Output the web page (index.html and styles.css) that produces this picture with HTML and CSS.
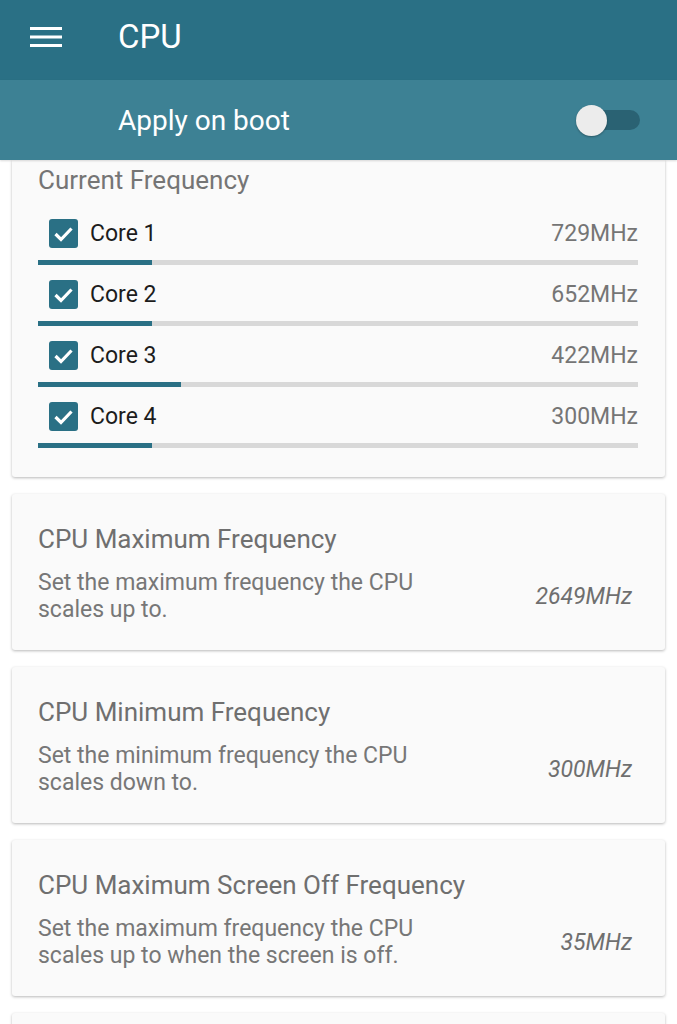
FILE: index.html
```html
<!DOCTYPE html>
<html>
<head>
<meta charset="utf-8">
<link rel="stylesheet" href="styles.css">
</head>
<body>
<header class="appbar">
  <svg class="menu" width="32" height="22" viewBox="0 0 32 22"><rect x="0" y="1" width="32" height="3" fill="#fff"/><rect x="0" y="9.5" width="32" height="3" fill="#fff"/><rect x="0" y="18" width="32" height="3" fill="#fff"/></svg>
  <span class="title">CPU</span>
</header>
<div class="bootbar">
  <span class="boot-label">Apply on boot</span>
  <span class="switch"><span class="track"></span><span class="thumb"></span></span>
</div>
<main class="content">
  <section class="card freq-card">
    <div class="card-heading">Current Frequency</div>
    <div class="core">
      <div class="core-row">
        <span class="check"><svg width="29" height="29" viewBox="0 0 29 29"><path d="M6.5 15 L12 20.5 L22.5 9.5" fill="none" stroke="#fff" stroke-width="3.2"/></svg></span>
        <span class="core-name">Core 1</span>
        <span class="core-freq">729MHz</span>
      </div>
      <div class="bar"><div class="fill" style="width:19%"></div></div>
    </div>
    <div class="core">
      <div class="core-row">
        <span class="check"><svg width="29" height="29" viewBox="0 0 29 29"><path d="M6.5 15 L12 20.5 L22.5 9.5" fill="none" stroke="#fff" stroke-width="3.2"/></svg></span>
        <span class="core-name">Core 2</span>
        <span class="core-freq">652MHz</span>
      </div>
      <div class="bar"><div class="fill" style="width:19%"></div></div>
    </div>
    <div class="core">
      <div class="core-row">
        <span class="check"><svg width="29" height="29" viewBox="0 0 29 29"><path d="M6.5 15 L12 20.5 L22.5 9.5" fill="none" stroke="#fff" stroke-width="3.2"/></svg></span>
        <span class="core-name">Core 3</span>
        <span class="core-freq">422MHz</span>
      </div>
      <div class="bar"><div class="fill" style="width:23.8%"></div></div>
    </div>
    <div class="core">
      <div class="core-row">
        <span class="check"><svg width="29" height="29" viewBox="0 0 29 29"><path d="M6.5 15 L12 20.5 L22.5 9.5" fill="none" stroke="#fff" stroke-width="3.2"/></svg></span>
        <span class="core-name">Core 4</span>
        <span class="core-freq">300MHz</span>
      </div>
      <div class="bar"><div class="fill" style="width:19%"></div></div>
    </div>
  </section>

  <section class="card pref">
    <div class="pref-title">CPU Maximum Frequency</div>
    <div class="pref-body">
      <div class="pref-desc">Set the maximum frequency the CPU scales up to.</div>
      <div class="pref-value">2649MHz</div>
    </div>
  </section>

  <section class="card pref">
    <div class="pref-title">CPU Minimum Frequency</div>
    <div class="pref-body">
      <div class="pref-desc">Set the minimum frequency the CPU scales down to.</div>
      <div class="pref-value">300MHz</div>
    </div>
  </section>

  <section class="card pref">
    <div class="pref-title">CPU Maximum Screen Off Frequency</div>
    <div class="pref-body">
      <div class="pref-desc">Set the maximum frequency the CPU scales up to when the screen is off.</div>
      <div class="pref-value">35MHz</div>
    </div>
  </section>

  <section class="card pref"></section>
</main>
</body>
</html>
```
FILE: styles.css
```css
html, body {
  margin: 0;
  padding: 0;
  background: #ffffff;
  font-family: Roboto, "Noto Sans", sans-serif;
  overflow: hidden;
  height: 1024px;
}
.appbar {
  height: 80px;
  background: #2a7085;
  display: flex;
  align-items: center;
  position: relative;
  z-index: 2;
}
.menu {
  margin-left: 30px;
  margin-top: -6px;
}
.title {
  margin-left: 56px;
  color: #fff;
  font-size: 33px;
  margin-top: -7px;
}
.bootbar {
  height: 80px;
  background: #3d8194;
  display: flex;
  align-items: center;
  position: relative;
  z-index: 2;
  box-shadow: 0 1px 2px rgba(0,0,0,0.15);
}
.boot-label {
  margin-left: 118px;
  color: #fff;
  font-size: 28px;
  flex: 1;
}
.switch {
  position: relative;
  width: 64px;
  height: 30px;
  margin-right: 37px;
}
.track {
  position: absolute;
  left: 8px;
  right: 0;
  top: 5px;
  height: 20px;
  border-radius: 10px;
  background: #2a6273;
}
.thumb {
  position: absolute;
  left: 0;
  top: 0;
  width: 31px;
  height: 31px;
  border-radius: 50%;
  background: #ececec;
  box-shadow: 0 1px 2px rgba(0,0,0,0.3);
}
.content {
  display: flex;
  flex-direction: column;
  gap: 17px;
  padding: 0 12px;
}
.card {
  background: #fafafa;
  border-radius: 3px;
  box-shadow: 0 1px 3px rgba(0,0,0,0.28);
}
.freq-card {
  border-radius: 0 0 3px 3px;
  padding: 4px 27px 20px 26px;
}
.card-heading {
  font-size: 26px;
  line-height: 32px;
  color: #757575;
  margin-bottom: 17px;
}
.core {
  height: 61px;
}
.core-row {
  height: 40px;
  display: flex;
  align-items: center;
}
.check {
  width: 29px;
  height: 29px;
  margin-left: 11px;
  border-radius: 3px;
  background: #2a7085;
  display: flex;
}
.core-name {
  margin-left: 12px;
  font-size: 23px;
  color: #1c1c1c;
  flex: 1;
}
.core-freq {
  font-size: 23px;
  color: #757575;
}
.bar {
  margin-top: 7px;
  height: 5px;
  background: #d8d8d8;
}
.fill {
  height: 100%;
  background: #2a7085;
}
.pref {
  height: 156px;
  box-sizing: border-box;
  padding: 29px 33px 0 26px;
}
.pref-title {
  font-size: 26px;
  line-height: 32px;
  color: #6f6f6f;
}
.pref-body {
  margin-top: 14px;
  display: flex;
  align-items: center;
}
.pref-desc {
  width: 440px;
  font-size: 23px;
  line-height: 27px;
  color: #777777;
}
.pref-value {
  flex: 1;
  text-align: right;
  font-size: 23px;
  font-style: italic;
  color: #6f6f6f;
}
```
